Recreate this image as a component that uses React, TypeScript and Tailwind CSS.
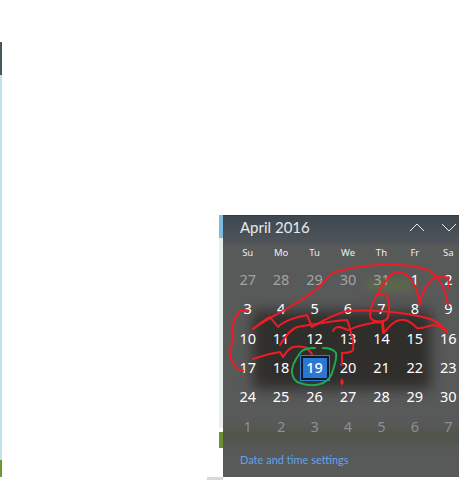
const weekdays = ["Su", "Mo", "Tu", "We", "Th", "Fr", "Sa"];

const days: { label: number; tone: string }[] = [
  ...[27, 28, 29, 30, 31].map((label) => ({ label, tone: "text-[#a3a3a3]" })),
  ...Array.from({ length: 30 }, (_, i) => ({ label: i + 1, tone: "text-white" })),
  ...[1, 2, 3, 4, 5, 6, 7].map((label) => ({ label, tone: "text-[#8c8f8f]" })),
];

function Scribbles() {
  return (
    <svg className="absolute left-0 top-0 pointer-events-none" width="459" height="480" fill="none" strokeLinecap="round" strokeLinejoin="round">
      <g stroke="#ee1c25" strokeWidth="2">
        <path d="M253 329C262 322 280 313 293 305C305 298 316 290 323 283C328 276 330 274 336 272C350 267 375 264 400 265C415 266 425 268 431 272C441 279 446 292 448 305" />
        <path d="M248 311H240C234 318 231 327 232 335C233 340 234 342 233 344C229 347 229 351 230 355C231 362 237 370 243 371" />
        <path d="M377 295C381 289 385 280 390 276C394 271 399 271 405 274C413 279 418 290 420 305" />
        <path d="M420 302C422 292 428 282 434 278C439 275 445 276 448 279C449 282 449 284 448 288" />
        <path d="M377 295C373 300 370 310 370 316C371 321 377 322 383 321C388 321 389 316 389 308C389 301 388 295 385 295C382 294 379 294 377 295Z" />
        <path d="M382 322L383 333" />
        <path d="M253 329C258 325 264 320 270 317L278 327C282 322 295 317 307 315L312 327C322 321 335 314 347 311C365 310 385 311 400 313C415 315 425 317 433 320C439 323 444 328 447 332" />
        <path d="M280 345C284 338 290 330 297 327C310 325 330 321 347 320C349 324 350 329 351 333C353 339 354 345 353 350C352 352 348 353 342 353V365" />
        <path d="M333 331C334 328 337 327 340 327L348 330C354 328 358 326 363 325C370 323 377 322 383 322L384 333C389 326 394 321 400 320C408 319 413 324 417 328C422 329 428 326 433 325C438 325 443 328 447 332" />
        <path d="M253 359C262 356 272 353 280 352L283 357C286 352 290 348 293 347C299 346 304 347 307 348L312 354" />
      </g>
      <path d="M342 378L344 382L342 386L340 382Z" fill="#ee1c25" />
      <path d="M315 348C307 348 302 350 300 353C295 360 291 367 292 373C293 379 296 382 300 383C308 386 316 386 323 383C329 380 332 375 333 370C335 364 337 358 336 353C334 350 329 348 323 348" stroke="#1fa84f" strokeWidth="2" fill="none" />
    </svg>
  );
}

export default function App() {
  return (
    <div className="relative flex h-[480px] w-[459px] overflow-hidden bg-white font-['Noto_Sans',sans-serif]">
      {/* sliver of the window behind, left edge */}
      <div className="flex h-full w-[2px] shrink-0 flex-col">
        <div className="h-[42px] bg-white" />
        <div className="h-[33px] bg-[#47595c]" />
        <div className="h-[385px] bg-[#bfe3e8]" />
        <div className="h-[17px] bg-[#6d9a2e]" />
        <div className="flex-1 bg-white" />
      </div>

      <div className="flex flex-1 flex-col items-end pt-[215px]">
        <div className="flex h-[262px] w-[240px]">
          <div className="flex w-[4px] shrink-0 flex-col">
            <div className="h-[23px] bg-[#7fbbe0]" />
            <div className="h-[190px] bg-[#e9eeee]" />
            <div className="h-[4px] bg-white" />
            <div className="h-[16px] bg-[#6d8f2f]" />
            <div className="flex-1 bg-white" />
          </div>

          <div className="relative w-[236px] overflow-hidden bg-[#585959]">
            {/* blurred desktop showing through the flyout */}
            <div className="absolute left-[30px] top-[96px] h-[78px] w-[178px] bg-[#2f2e2b] blur-[7px]" />
            <div className="absolute left-[144px] top-[65px] h-[10px] w-[46px] bg-[#5f6b48] blur-[4px]" />
            <div className="absolute left-[-10px] top-[217px] h-[10px] w-[260px] bg-[#4d5244] blur-[5px]" />
            <div className="absolute left-0 top-0 h-[30px] w-full bg-gradient-to-b from-[#3c474f] to-[#47505a]/40" />

            <div className="relative">
              <div className="flex h-[23px] items-center justify-between border-t border-[#333b42] pl-[17px] pr-[2px]">
                <span className="font-['Lato',sans-serif] text-[15px] leading-none text-[#e8eaeb]">April 2016</span>
                <div className="flex items-center gap-[16px]">
                  <svg width="16" height="9" viewBox="0 0 16 9" fill="none" stroke="#e8eaeb" strokeWidth="1">
                    <path d="M1 8L8 1L15 8" />
                  </svg>
                  <svg width="16" height="9" viewBox="0 0 16 9" fill="none" stroke="#e8eaeb" strokeWidth="1">
                    <path d="M1 1L8 8L15 1" />
                  </svg>
                </div>
              </div>

              <div className="ml-[8px] mt-[7px] grid w-[234px] grid-cols-7">
                {weekdays.map((d) => (
                  <div key={d} className="flex h-[16px] items-center justify-center text-[9.5px] text-[#eeeeee]">
                    {d}
                  </div>
                ))}
              </div>

              <div className="ml-[8px] mt-[4px] grid w-[234px] grid-cols-7 auto-rows-[29.4px]">
                {days.map((d, i) => (
                  <div key={i} className={`flex items-center justify-center text-[14.5px] ${d.tone}`}>
                    {d.label === 19 && d.tone === "text-white" ? (
                      <span className="flex h-[26px] w-[30px] items-center justify-center border border-[#2f7fd8] bg-[#2b78d2] font-medium shadow-[inset_0_0_0_2px_#0d1a2a]">
                        19
                      </span>
                    ) : (
                      d.label
                    )}
                  </div>
                ))}
              </div>

              <div className="pl-[17px] pt-[11px] font-['Lato',sans-serif] text-[11px] leading-[16px] text-[#5ea5ec]">Date and time settings</div>
            </div>
          </div>
        </div>
        <div className="ml-[205px] h-[3px] w-[16px] self-start bg-[#d8d8d8]" />
      </div>

      <Scribbles />
    </div>
  );
}
